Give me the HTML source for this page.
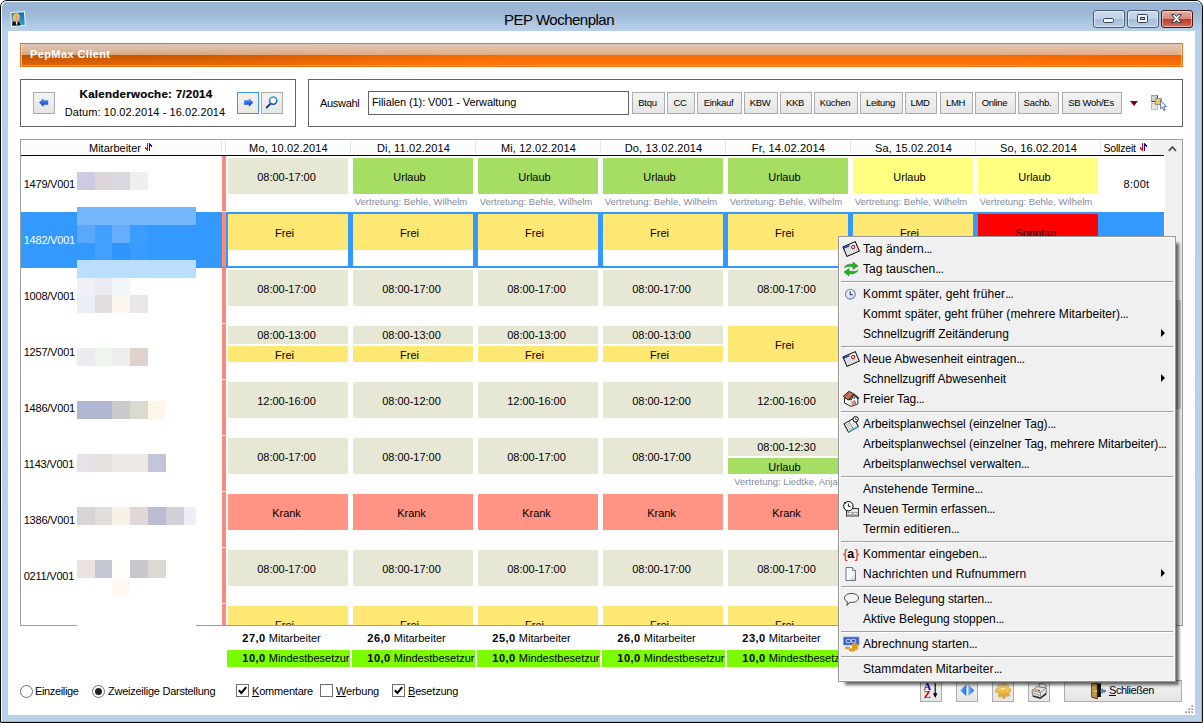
<!DOCTYPE html><html><head><meta charset="utf-8"><title>PEP Wochenplan</title><style>
*{box-sizing:border-box;margin:0;padding:0}
html,body{width:1203px;height:723px;overflow:hidden;background:#fff;font-family:"Liberation Sans",sans-serif;font-size:11px;color:#000}
.a{position:absolute}
svg{position:absolute;overflow:visible}
#frame{left:0;top:0;width:1203px;height:723px;border:1px solid #0c0c0c;border-radius:7px 7px 1px 1px;background:linear-gradient(#98b4d3 0,#9db8d6 12px,#adc6e2 22px,#b9d0ea 30px,#b9d1ea 100%)}
#frame2{left:1px;top:1px;width:1201px;height:721px;border:1px solid #fafcfe;border-right-color:#46d8fa;border-bottom-color:#46d8fa;border-radius:6px 6px 1px 1px}
#client{left:8px;top:31px;width:1187px;height:684px;background:#fff}
#title{left:504px;top:10px;font-size:15px;line-height:20px;letter-spacing:-0.5px;white-space:nowrap}
.cb{top:10px;height:18px;border:1px solid #4b5a70;border-radius:3px;background:linear-gradient(#c9daed 0,#c0d3e9 48%,#a5bedc 52%,#b7cde7 100%);box-shadow:inset 0 0 0 1px rgba(255,255,255,.5)}
#orange{left:20px;top:43px;width:1163px;height:24px;border:1px solid #dc7626;border-bottom-color:#f66e08;color:#fff;font-weight:bold;font-size:11px;line-height:20px;padding-left:9px;letter-spacing:.4px;
 background:linear-gradient(rgba(222,200,186,.97) 0,rgba(222,197,178,.9) 25%,rgba(222,196,175,.71) 50%,rgba(0,0,0,.04) 51%,rgba(255,120,16,.2) 75%,rgba(255,120,16,.5) 100%),linear-gradient(90deg,#c45400 0,#d05a00 14%,#f46a04 32%,#ff7008 45%,#ff7008 80%,#f66600 100%);box-shadow:inset 1px 0 0 rgba(255,255,255,.6),inset -1px 0 0 rgba(255,255,255,.5),inset 0 -1px 0 rgba(255,255,255,.3)}
.box{border:1px solid #646464;background:#fff}
.btn{border:1px solid #acacac;background:linear-gradient(#f3f3f3,#e5e5e5);text-align:center;font-size:9.5px;letter-spacing:-.3px;line-height:19.5px;padding-right:2px;height:22px;top:92px;white-space:nowrap}
.hd{top:141px;height:15px;line-height:15px;text-align:center;font-size:11px;white-space:nowrap}
.c{text-align:center;font-size:11px;white-space:nowrap}
.cm{font-size:9.5px;color:#838a9c;line-height:12px;white-space:nowrap;overflow:hidden;text-align:center;padding-right:4px}
.lbl{left:23.7px;font-size:11px;line-height:12px;letter-spacing:-.22px}
.be{background:#e7e7d6}.ye{background:#ffe773}.gr{background:#a5de63}.ly{background:#ffff80}.rd{background:#ff0000}.kr{background:#ff9484}
#menu{left:838px;top:236px;width:338px;height:446px;background:#f0f0f0;border:1px solid #979797;outline:0;box-shadow:inset 0 0 0 1px rgba(255,255,255,.55),5px 5px 3px -2px rgba(0,0,0,.6)}
.mi{left:24px;font-size:12px;line-height:20px;height:20px;white-space:nowrap;color:#000}
.sep{left:2px;width:332px;height:2px;background:#a0a0a0;border-bottom:1px solid #fff}
.arr{left:322px;width:0;height:0;border-left:4px solid #000;border-top:4px solid transparent;border-bottom:4px solid transparent}
</style></head><body>
<div id="frame" class="a"></div><div id="frame2" class="a"></div>
<div id="title" class="a">PEP Wochenplan</div>
<svg style="left:10px;top:11px" width="16" height="16" viewBox="0 0 16 16"><defs><linearGradient id="ag" x1="0" y1="1" x2="1" y2="0"><stop offset="0" stop-color="#66bcd8"/><stop offset="1" stop-color="#0068bc"/></linearGradient></defs>
<g transform="rotate(-4 8 8)"><rect x="0.6" y="0.6" width="14.8" height="14.8" fill="#f2f7fb"/><rect x="1.6" y="1.6" width="12.8" height="12.8" fill="url(#ag)"/>
<path d="M3.2 9.5 C2.6 5 4 2.4 6.6 2.2 C9.2 2.1 10.2 4.2 9.8 6.4 L9 9.6 L5 10.4 Z" fill="#f6c640"/><path d="M5.6 5.2 C6.2 3.6 8.6 3.8 8.8 5.6 C9 7.6 8.4 9.6 7.2 10.4 L5.4 10.2 C5 8.6 5 6.6 5.6 5.2 Z" fill="#e8a48c"/>
<path d="M1.8 14.4 L2.2 11.4 C2.8 10.4 4.6 10 5.4 10.2 L6.4 14.4 Z M6.6 14.4 L7.2 10.4 C8.6 10.2 9.6 11.6 10 14.4 Z" fill="#0c0c0c"/><path d="M5.2 10 L6.5 14.4 L7.4 10.2 L6.4 11 Z" fill="#fff"/></g></svg>
<div class="a cb" style="left:1093px;width:32px"></div>
<div class="a cb" style="left:1127px;width:32px"></div>
<div class="a cb" style="left:1161px;width:32px;border-color:#4a1418;background:linear-gradient(#e3b0a4 0,#d68874 48%,#bd3a24 52%,#d2705a 100%)"></div>
<svg style="left:1103px;top:18px" width="11" height="5"><rect x=".5" y=".5" width="10" height="4" rx="1" fill="#f4f4f4" stroke="#3a4350"/></svg>
<svg style="left:1137px;top:14px" width="11" height="9"><rect x=".5" y=".5" width="10" height="8" rx="1" fill="#f4f4f4" stroke="#3a4350"/><rect x="3.5" y="3.5" width="4" height="2" fill="#a9c0dc" stroke="#3a4350"/></svg>
<svg style="left:1171px;top:14px" width="11" height="9" viewBox="0 0 11 9"><path d="M.6 .6 L3.8 .6 L5.5 2.5 L7.2 .6 L10.4 .6 L7.2 4.5 L10.4 8.4 L7.2 8.4 L5.5 6.5 L3.8 8.4 L.6 8.4 L3.8 4.5 Z" fill="#f8f8f8" stroke="#2c3850" stroke-width="1" stroke-linejoin="round"/></svg>
<div id="client" class="a"></div>
<div id="orange" class="a">PepMax Client</div>
<div class="a box" style="left:20px;top:79px;width:276px;height:48px"></div>
<div class="a" style="left:46px;top:87px;width:200px;text-align:center;font-weight:bold;font-size:11.5px;letter-spacing:.27px;line-height:14px;white-space:nowrap;-webkit-text-stroke:.2px #000">Kalenderwoche: 7/2014</div>
<div class="a" style="left:45px;top:105px;width:200px;text-align:center;font-size:11px;letter-spacing:.07px;line-height:14px;white-space:nowrap">Datum: 10.02.2014 - 16.02.2014</div>
<div class="a btn" style="left:33px;width:22px"></div>
<div class="a btn" style="left:237px;width:22px;border-color:#3399ff;background:linear-gradient(#f6f1ea,#ebe7e3)"></div>
<div class="a btn" style="left:261px;width:22px"></div>
<svg style="left:39px;top:98px" width="10" height="9" viewBox="0 0 10 9"><defs><linearGradient id="bl" x1="0" y1="0" x2="0" y2="1"><stop offset="0" stop-color="#6aa0f8"/><stop offset=".5" stop-color="#2f6ae0"/><stop offset="1" stop-color="#1038a8"/></linearGradient></defs><path d="M0 4.5 L4.5 0 L4.5 2.2 L9.2 2.2 L9.2 6.8 L4.5 6.8 L4.5 9 Z" fill="url(#bl)"/></svg>
<svg style="left:244px;top:98px" width="10" height="9" viewBox="0 0 10 9"><path d="M9.4 4.5 L4.9 0 L4.9 2.2 L0.2 2.2 L0.2 6.8 L4.9 6.8 L4.9 9 Z" fill="url(#bl)"/></svg>
<svg style="left:264px;top:95px" width="16" height="16" viewBox="0 0 16 16"><defs><linearGradient id="mg" x1="0" y1="0" x2="0" y2="1"><stop offset="0" stop-color="#30a8d0"/><stop offset="1" stop-color="#1848b0"/></linearGradient></defs><path d="M6.8 8.4 L2.2 13" stroke="#12307c" stroke-width="1.8"/><circle cx="9.2" cy="5.6" r="3.6" fill="#fff" stroke="url(#mg)" stroke-width="1.5"/></svg>
<div class="a box" style="left:308px;top:79px;width:875px;height:48px"></div>
<div class="a" style="left:320px;top:96px;font-size:11px;line-height:14px;letter-spacing:-.3px">Auswahl</div>
<div class="a box" style="left:368px;top:91px;width:261px;height:24px;font-size:11px;line-height:20px;padding-left:3px;white-space:nowrap;letter-spacing:-.1px">Filialen (1): V001 - Verwaltung</div>
<div class="a btn" style="left:632px;width:33px">Btqu</div>
<div class="a btn" style="left:667px;width:28px">CC</div>
<div class="a btn" style="left:697px;width:45px">Einkauf</div>
<div class="a btn" style="left:744px;width:34px">KBW</div>
<div class="a btn" style="left:780px;width:32px">KKB</div>
<div class="a btn" style="left:814px;width:44px">Küchen</div>
<div class="a btn" style="left:860px;width:43px">Leitung</div>
<div class="a btn" style="left:905px;width:32px">LMD</div>
<div class="a btn" style="left:940px;width:33px">LMH</div>
<div class="a btn" style="left:975px;width:41px">Online</div>
<div class="a btn" style="left:1018px;width:41px">Sachb.</div>
<div class="a btn" style="left:1062px;width:60px">SB Woh/Es</div>
<div class="a" style="left:1130px;top:101px;width:0;height:0;border-top:5px solid #800000;border-left:4.7px solid transparent;border-right:4.7px solid transparent"></div>
<svg style="left:1151px;top:95px" width="16" height="16" viewBox="0 0 16 16"><rect x=".5" y=".5" width="6" height="6" fill="#cfd2d8" stroke="#98a2b6"/><path d="M.5 6.5 H6.5 V.5" fill="none" stroke="#24387a"/><rect x=".5" y="8.5" width="6" height="6" fill="#e2e4e8" stroke="#b4bccc"/><rect x="4.5" y="3.5" width="6" height="6" fill="#f6cc58" stroke="#a89070"/><path d="M9.4 5.2 L9.4 14 L11.4 12.2 L12.9 15.6 L14.2 15 L12.7 11.7 L15.7 11.5 Z" fill="#e8eef6" stroke="#3c5c94" stroke-width=".8"/></svg>
<div class="a" style="left:20px;top:139px;width:1163px;height:487px;border:1px solid #9a9ea4;background:#fff"></div>
<div class="a" style="left:21px;top:140px;width:1130px;height:14px;background:linear-gradient(#fff,#fafbfc)"></div>
<div class="a" style="left:21px;top:155px;width:1143px;height:1px;background:#000"></div>
<div class="a hd" style="left:89px;text-align:left">Mitarbeiter</div>
<svg style="left:145px;top:143px" width="7" height="8" viewBox="0 0 7 8" shape-rendering="crispEdges"><g fill="#f00"><rect x="2" y="0" width="1" height="8"/><rect x="1" y="5" width="1" height="2"/><rect x="0" y="4" width="1" height="2"/></g><g fill="#00f"><rect x="4" y="0" width="1" height="8"/><rect x="5" y="1" width="1" height="2"/><rect x="6" y="2" width="1" height="2"/></g></svg>
<div class="a hd" style="left:226px;width:125px;letter-spacing:.17px">Mo, 10.02.2014</div>
<div class="a" style="left:225px;top:140px;width:1px;height:13px;background:#dfe8f4"></div>
<div class="a hd" style="left:351px;width:125px;letter-spacing:.17px">Di, 11.02.2014</div>
<div class="a" style="left:350px;top:140px;width:1px;height:13px;background:#dfe8f4"></div>
<div class="a hd" style="left:476px;width:125px;letter-spacing:.17px">Mi, 12.02.2014</div>
<div class="a" style="left:475px;top:140px;width:1px;height:13px;background:#dfe8f4"></div>
<div class="a hd" style="left:601px;width:125px;letter-spacing:.17px">Do, 13.02.2014</div>
<div class="a" style="left:600px;top:140px;width:1px;height:13px;background:#dfe8f4"></div>
<div class="a hd" style="left:726px;width:125px;letter-spacing:.17px">Fr, 14.02.2014</div>
<div class="a" style="left:725px;top:140px;width:1px;height:13px;background:#dfe8f4"></div>
<div class="a hd" style="left:851px;width:125px;letter-spacing:.17px">Sa, 15.02.2014</div>
<div class="a" style="left:850px;top:140px;width:1px;height:13px;background:#dfe8f4"></div>
<div class="a hd" style="left:976px;width:125px;letter-spacing:.17px">So, 16.02.2014</div>
<div class="a" style="left:975px;top:140px;width:1px;height:13px;background:#dfe8f4"></div>
<div class="a" style="left:221px;top:140px;width:1px;height:13px;background:#dfe8f4"></div>
<div class="a" style="left:1100px;top:140px;width:1px;height:13px;background:#dfe8f4"></div>
<div class="a hd" style="left:1103.5px;text-align:left;letter-spacing:-.2px;font-size:10.5px">Sollzeit</div>
<svg style="left:1140px;top:143px" width="7" height="8" viewBox="0 0 7 8" shape-rendering="crispEdges"><g fill="#f00"><rect x="2" y="0" width="1" height="8"/><rect x="1" y="5" width="1" height="2"/><rect x="0" y="4" width="1" height="2"/></g><g fill="#00f"><rect x="4" y="0" width="1" height="8"/><rect x="5" y="1" width="1" height="2"/><rect x="6" y="2" width="1" height="2"/></g></svg>
<div class="a" style="left:1165px;top:140px;width:17px;height:485px;background:#f0f0f0"></div>
<div class="a" style="left:1151px;top:140px;width:14px;height:15px;background:#f0f0f0"></div>
<div class="a" style="left:1166px;top:300px;width:15px;height:109px;background:#c8c8c8"></div>
<svg style="left:1168px;top:145px" width="9" height="7" viewBox="0 0 9 7"><path d="M.8 5.8 L4.4 2 L8 5.8" fill="none" stroke="#505050" stroke-width="1.7"/></svg>
<div class="a" style="left:222px;top:156px;width:4px;height:55px;background:#f98b7e"></div>
<div class="a lbl" style="top:178px;color:#000">1479/V001</div>
<div class="a c be" style="left:228px;top:158px;width:120px;height:36px;line-height:39px;overflow:hidden;padding-right:3px">08:00-17:00</div>
<div class="a c gr" style="left:353px;top:158px;width:120px;height:36px;line-height:39px;overflow:hidden;padding-right:7px">Urlaub</div>
<div class="a cm" style="left:353px;top:196px;width:120px">Vertretung: Behle, Wilhelm</div>
<div class="a c gr" style="left:478px;top:158px;width:120px;height:36px;line-height:39px;overflow:hidden;padding-right:7px">Urlaub</div>
<div class="a cm" style="left:478px;top:196px;width:120px">Vertretung: Behle, Wilhelm</div>
<div class="a c gr" style="left:603px;top:158px;width:120px;height:36px;line-height:39px;overflow:hidden;padding-right:7px">Urlaub</div>
<div class="a cm" style="left:603px;top:196px;width:120px">Vertretung: Behle, Wilhelm</div>
<div class="a c gr" style="left:728px;top:158px;width:120px;height:36px;line-height:39px;overflow:hidden;padding-right:7px">Urlaub</div>
<div class="a cm" style="left:728px;top:196px;width:120px">Vertretung: Behle, Wilhelm</div>
<div class="a c ly" style="left:853px;top:158px;width:120px;height:36px;line-height:39px;overflow:hidden;padding-right:7px">Urlaub</div>
<div class="a cm" style="left:853px;top:196px;width:120px">Vertretung: Behle, Wilhelm</div>
<div class="a c ly" style="left:978px;top:158px;width:120px;height:36px;line-height:39px;overflow:hidden;padding-right:7px">Urlaub</div>
<div class="a cm" style="left:978px;top:196px;width:120px">Vertretung: Behle, Wilhelm</div>
<div class="a" style="left:21px;top:212px;width:1143px;height:56px;background:#3399ff"></div>
<div class="a" style="left:222px;top:212px;width:4px;height:55px;background:#f98b7e"></div>
<div class="a lbl" style="top:234px;color:#fff">1482/V001</div>
<div class="a" style="left:228px;top:250px;width:120px;height:16px;background:#fff"></div>
<div class="a c ye" style="left:228px;top:214px;width:120px;height:36px;line-height:39px;overflow:hidden;padding-right:7px">Frei</div>
<div class="a" style="left:353px;top:250px;width:120px;height:16px;background:#fff"></div>
<div class="a c ye" style="left:353px;top:214px;width:120px;height:36px;line-height:39px;overflow:hidden;padding-right:7px">Frei</div>
<div class="a" style="left:478px;top:250px;width:120px;height:16px;background:#fff"></div>
<div class="a c ye" style="left:478px;top:214px;width:120px;height:36px;line-height:39px;overflow:hidden;padding-right:7px">Frei</div>
<div class="a" style="left:603px;top:250px;width:120px;height:16px;background:#fff"></div>
<div class="a c ye" style="left:603px;top:214px;width:120px;height:36px;line-height:39px;overflow:hidden;padding-right:7px">Frei</div>
<div class="a" style="left:728px;top:250px;width:120px;height:16px;background:#fff"></div>
<div class="a c ye" style="left:728px;top:214px;width:120px;height:36px;line-height:39px;overflow:hidden;padding-right:7px">Frei</div>
<div class="a" style="left:853px;top:250px;width:120px;height:16px;background:#fff"></div>
<div class="a c ye" style="left:853px;top:214px;width:120px;height:36px;line-height:39px;overflow:hidden;padding-right:7px">Frei</div>
<div class="a" style="left:978px;top:250px;width:120px;height:16px;background:#fff"></div>
<div class="a c rd" style="left:978px;top:214px;width:120px;height:36px;line-height:39px;overflow:hidden;padding-right:4px">Sonntag</div>
<div class="a" style="left:222px;top:268px;width:4px;height:55px;background:#f98b7e"></div>
<div class="a lbl" style="top:290px;color:#000">1008/V001</div>
<div class="a c be" style="left:228px;top:270px;width:120px;height:36px;line-height:39px;overflow:hidden;padding-right:3px">08:00-17:00</div>
<div class="a c be" style="left:353px;top:270px;width:120px;height:36px;line-height:39px;overflow:hidden;padding-right:3px">08:00-17:00</div>
<div class="a c be" style="left:478px;top:270px;width:120px;height:36px;line-height:39px;overflow:hidden;padding-right:3px">08:00-17:00</div>
<div class="a c be" style="left:603px;top:270px;width:120px;height:36px;line-height:39px;overflow:hidden;padding-right:3px">08:00-17:00</div>
<div class="a c be" style="left:728px;top:270px;width:120px;height:36px;line-height:39px;overflow:hidden;padding-right:3px">08:00-17:00</div>
<div class="a" style="left:222px;top:324px;width:4px;height:55px;background:#f98b7e"></div>
<div class="a lbl" style="top:346px;color:#000">1257/V001</div>
<div class="a c be" style="left:228px;top:326px;width:120px;height:18px;line-height:19px;padding-right:3px">08:00-13:00</div>
<div class="a c ye" style="left:228px;top:346px;width:120px;height:16px;line-height:18px;padding-right:7px">Frei</div>
<div class="a c be" style="left:353px;top:326px;width:120px;height:18px;line-height:19px;padding-right:3px">08:00-13:00</div>
<div class="a c ye" style="left:353px;top:346px;width:120px;height:16px;line-height:18px;padding-right:7px">Frei</div>
<div class="a c be" style="left:478px;top:326px;width:120px;height:18px;line-height:19px;padding-right:3px">08:00-13:00</div>
<div class="a c ye" style="left:478px;top:346px;width:120px;height:16px;line-height:18px;padding-right:7px">Frei</div>
<div class="a c be" style="left:603px;top:326px;width:120px;height:18px;line-height:19px;padding-right:3px">08:00-13:00</div>
<div class="a c ye" style="left:603px;top:346px;width:120px;height:16px;line-height:18px;padding-right:7px">Frei</div>
<div class="a c ye" style="left:728px;top:326px;width:120px;height:36px;line-height:39px;overflow:hidden;padding-right:7px">Frei</div>
<div class="a" style="left:222px;top:380px;width:4px;height:55px;background:#f98b7e"></div>
<div class="a lbl" style="top:402px;color:#000">1486/V001</div>
<div class="a c be" style="left:228px;top:382px;width:120px;height:36px;line-height:39px;overflow:hidden;padding-right:3px">12:00-16:00</div>
<div class="a c be" style="left:353px;top:382px;width:120px;height:36px;line-height:39px;overflow:hidden;padding-right:3px">08:00-12:00</div>
<div class="a c be" style="left:478px;top:382px;width:120px;height:36px;line-height:39px;overflow:hidden;padding-right:3px">12:00-16:00</div>
<div class="a c be" style="left:603px;top:382px;width:120px;height:36px;line-height:39px;overflow:hidden;padding-right:3px">08:00-12:00</div>
<div class="a c be" style="left:728px;top:382px;width:120px;height:36px;line-height:39px;overflow:hidden;padding-right:3px">12:00-16:00</div>
<div class="a" style="left:222px;top:436px;width:4px;height:55px;background:#f98b7e"></div>
<div class="a lbl" style="top:458px;color:#000">1143/V001</div>
<div class="a c be" style="left:228px;top:438px;width:120px;height:36px;line-height:39px;overflow:hidden;padding-right:3px">08:00-17:00</div>
<div class="a c be" style="left:353px;top:438px;width:120px;height:36px;line-height:39px;overflow:hidden;padding-right:3px">08:00-17:00</div>
<div class="a c be" style="left:478px;top:438px;width:120px;height:36px;line-height:39px;overflow:hidden;padding-right:3px">08:00-17:00</div>
<div class="a c be" style="left:603px;top:438px;width:120px;height:36px;line-height:39px;overflow:hidden;padding-right:3px">08:00-17:00</div>
<div class="a c be" style="left:728px;top:438px;width:120px;height:18px;line-height:19px;padding-right:3px">08:00-12:30</div>
<div class="a c gr" style="left:728px;top:458px;width:120px;height:16px;line-height:18px;padding-right:7px">Urlaub</div>
<div class="a cm" style="left:728px;top:476px;width:120px">Vertretung: Liedtke, Anja</div>
<div class="a" style="left:222px;top:492px;width:4px;height:55px;background:#f98b7e"></div>
<div class="a lbl" style="top:514px;color:#000">1386/V001</div>
<div class="a c kr" style="left:228px;top:494px;width:120px;height:36px;line-height:39px;overflow:hidden;padding-right:3px">Krank</div>
<div class="a c kr" style="left:353px;top:494px;width:120px;height:36px;line-height:39px;overflow:hidden;padding-right:3px">Krank</div>
<div class="a c kr" style="left:478px;top:494px;width:120px;height:36px;line-height:39px;overflow:hidden;padding-right:3px">Krank</div>
<div class="a c kr" style="left:603px;top:494px;width:120px;height:36px;line-height:39px;overflow:hidden;padding-right:3px">Krank</div>
<div class="a c kr" style="left:728px;top:494px;width:120px;height:36px;line-height:39px;overflow:hidden;padding-right:3px">Krank</div>
<div class="a" style="left:222px;top:548px;width:4px;height:55px;background:#f98b7e"></div>
<div class="a lbl" style="top:570px;color:#000">0211/V001</div>
<div class="a c be" style="left:228px;top:550px;width:120px;height:36px;line-height:39px;overflow:hidden;padding-right:3px">08:00-17:00</div>
<div class="a c be" style="left:353px;top:550px;width:120px;height:36px;line-height:39px;overflow:hidden;padding-right:3px">08:00-17:00</div>
<div class="a c be" style="left:478px;top:550px;width:120px;height:36px;line-height:39px;overflow:hidden;padding-right:3px">08:00-17:00</div>
<div class="a c be" style="left:603px;top:550px;width:120px;height:36px;line-height:39px;overflow:hidden;padding-right:3px">08:00-17:00</div>
<div class="a c be" style="left:728px;top:550px;width:120px;height:36px;line-height:39px;overflow:hidden;padding-right:3px">08:00-17:00</div>
<div class="a" style="left:222px;top:604px;width:4px;height:21px;background:#f98b7e"></div>
<div class="a c ye" style="left:228px;top:606px;width:120px;height:19px;line-height:39px;overflow:hidden;padding-right:7px">Frei</div>
<div class="a c ye" style="left:353px;top:606px;width:120px;height:19px;line-height:39px;overflow:hidden;padding-right:7px">Frei</div>
<div class="a c ye" style="left:478px;top:606px;width:120px;height:19px;line-height:39px;overflow:hidden;padding-right:7px">Frei</div>
<div class="a c ye" style="left:603px;top:606px;width:120px;height:19px;line-height:39px;overflow:hidden;padding-right:7px">Frei</div>
<div class="a c ye" style="left:728px;top:606px;width:120px;height:19px;line-height:39px;overflow:hidden;padding-right:7px">Frei</div>
<div class="a" style="left:1123.5px;top:178px;font-size:11px;line-height:12px;letter-spacing:.3px">8:00t</div>
<div class="a" style="left:77px;top:172px;width:18px;height:18px;background:#cbcce2"></div>
<div class="a" style="left:95px;top:172px;width:17px;height:18px;background:#dcd6da"></div>
<div class="a" style="left:112px;top:172px;width:18px;height:18px;background:#d8d8de"></div>
<div class="a" style="left:130px;top:172px;width:18px;height:18px;background:#f1efee"></div>
<div class="a" style="left:77px;top:207px;width:18px;height:18px;background:#74b7fd"></div>
<div class="a" style="left:95px;top:207px;width:17px;height:18px;background:#74b7fd"></div>
<div class="a" style="left:112px;top:207px;width:18px;height:18px;background:#74b7fd"></div>
<div class="a" style="left:130px;top:207px;width:18px;height:18px;background:#74b7fd"></div>
<div class="a" style="left:148px;top:207px;width:18px;height:18px;background:#74b7fd"></div>
<div class="a" style="left:166px;top:207px;width:18px;height:18px;background:#74b7fd"></div>
<div class="a" style="left:184px;top:207px;width:12px;height:18px;background:#74b7fd"></div>
<div class="a" style="left:77px;top:225px;width:18px;height:18px;background:#5aa8fd"></div>
<div class="a" style="left:95px;top:225px;width:17px;height:18px;background:#409fff"></div>
<div class="a" style="left:112px;top:225px;width:18px;height:18px;background:#66adfc"></div>
<div class="a" style="left:130px;top:225px;width:18px;height:18px;background:#3d9cff"></div>
<div class="a" style="left:77px;top:243px;width:18px;height:17px;background:#3399ff"></div>
<div class="a" style="left:95px;top:243px;width:17px;height:17px;background:#43a0ff"></div>
<div class="a" style="left:112px;top:243px;width:18px;height:17px;background:#2f96ff"></div>
<div class="a" style="left:130px;top:243px;width:18px;height:17px;background:#3b9cff"></div>
<div class="a" style="left:77px;top:260px;width:18px;height:18px;background:#bcdefe"></div>
<div class="a" style="left:95px;top:260px;width:17px;height:18px;background:#bcdefe"></div>
<div class="a" style="left:112px;top:260px;width:18px;height:18px;background:#bcdefe"></div>
<div class="a" style="left:130px;top:260px;width:18px;height:18px;background:#bcdefe"></div>
<div class="a" style="left:148px;top:260px;width:18px;height:18px;background:#bcdefe"></div>
<div class="a" style="left:166px;top:260px;width:18px;height:18px;background:#bcdefe"></div>
<div class="a" style="left:184px;top:260px;width:12px;height:18px;background:#bcdefe"></div>
<div class="a" style="left:77px;top:278px;width:18px;height:17px;background:#f0f0f8"></div>
<div class="a" style="left:95px;top:278px;width:17px;height:17px;background:#ebeaf0"></div>
<div class="a" style="left:112px;top:278px;width:18px;height:17px;background:#f2f5f9"></div>
<div class="a" style="left:130px;top:278px;width:18px;height:17px;background:#fcfefe"></div>
<div class="a" style="left:77px;top:295px;width:18px;height:18px;background:#eaf0f8"></div>
<div class="a" style="left:95px;top:295px;width:17px;height:18px;background:#e2dee0"></div>
<div class="a" style="left:112px;top:295px;width:18px;height:18px;background:#fdf6ee"></div>
<div class="a" style="left:130px;top:295px;width:18px;height:18px;background:#e8e6e6"></div>
<div class="a" style="left:77px;top:348px;width:18px;height:18px;background:#eaecef"></div>
<div class="a" style="left:95px;top:348px;width:17px;height:18px;background:#edf5ec"></div>
<div class="a" style="left:112px;top:348px;width:18px;height:18px;background:#eceef0"></div>
<div class="a" style="left:130px;top:348px;width:18px;height:18px;background:#e0d3cb"></div>
<div class="a" style="left:77px;top:401px;width:18px;height:18px;background:#b1b6d2"></div>
<div class="a" style="left:95px;top:401px;width:17px;height:18px;background:#b1b6d2"></div>
<div class="a" style="left:112px;top:401px;width:18px;height:18px;background:#cbcbcd"></div>
<div class="a" style="left:130px;top:401px;width:18px;height:18px;background:#dadace"></div>
<div class="a" style="left:148px;top:401px;width:18px;height:18px;background:#fef6e6"></div>
<div class="a" style="left:77px;top:454px;width:18px;height:18px;background:#e6e2e6"></div>
<div class="a" style="left:95px;top:454px;width:17px;height:18px;background:#e4e2de"></div>
<div class="a" style="left:112px;top:454px;width:18px;height:18px;background:#eceae4"></div>
<div class="a" style="left:130px;top:454px;width:18px;height:18px;background:#eceae2"></div>
<div class="a" style="left:148px;top:454px;width:18px;height:18px;background:#c4c4da"></div>
<div class="a" style="left:77px;top:507px;width:18px;height:18px;background:#d9d5d7"></div>
<div class="a" style="left:95px;top:507px;width:17px;height:18px;background:#e2dfdb"></div>
<div class="a" style="left:112px;top:507px;width:18px;height:18px;background:#f5f1e5"></div>
<div class="a" style="left:130px;top:507px;width:18px;height:18px;background:#e1d7d9"></div>
<div class="a" style="left:148px;top:507px;width:18px;height:18px;background:#babcd2"></div>
<div class="a" style="left:166px;top:507px;width:18px;height:18px;background:#d2d0d6"></div>
<div class="a" style="left:184px;top:507px;width:12px;height:18px;background:#eeeefa"></div>
<div class="a" style="left:77px;top:560px;width:18px;height:18px;background:#ebe3e1"></div>
<div class="a" style="left:95px;top:560px;width:17px;height:18px;background:#c2c8d4"></div>
<div class="a" style="left:112px;top:560px;width:18px;height:18px;background:#fffefa"></div>
<div class="a" style="left:130px;top:560px;width:18px;height:18px;background:#c9c7cd"></div>
<div class="a" style="left:148px;top:560px;width:18px;height:18px;background:#dcd8d4"></div>
<div class="a" style="left:112px;top:578px;width:18px;height:17px;background:#fff8f0"></div>
<div class="a" style="left:77px;top:620px;width:119px;height:8px;background:#fff"></div>
<div class="a c" style="left:227px;top:631px;width:123px;height:14px;line-height:14px;text-align:left;padding-left:15.3px"><b style="letter-spacing:.5px">27,0</b> Mitarbeiter</div>
<div class="a c" style="left:227px;top:650px;width:123px;height:17px;line-height:17px;background:#7cfc00;text-align:left;padding-left:15.3px;overflow:hidden"><b style="letter-spacing:.5px">10,0</b> Mindestbesetzur</div>
<div class="a c" style="left:352px;top:631px;width:123px;height:14px;line-height:14px;text-align:left;padding-left:15.3px"><b style="letter-spacing:.5px">26,0</b> Mitarbeiter</div>
<div class="a c" style="left:352px;top:650px;width:123px;height:17px;line-height:17px;background:#7cfc00;text-align:left;padding-left:15.3px;overflow:hidden"><b style="letter-spacing:.5px">10,0</b> Mindestbesetzur</div>
<div class="a c" style="left:477px;top:631px;width:123px;height:14px;line-height:14px;text-align:left;padding-left:15.3px"><b style="letter-spacing:.5px">25,0</b> Mitarbeiter</div>
<div class="a c" style="left:477px;top:650px;width:123px;height:17px;line-height:17px;background:#7cfc00;text-align:left;padding-left:15.3px;overflow:hidden"><b style="letter-spacing:.5px">10,0</b> Mindestbesetzur</div>
<div class="a c" style="left:602px;top:631px;width:123px;height:14px;line-height:14px;text-align:left;padding-left:15.3px"><b style="letter-spacing:.5px">26,0</b> Mitarbeiter</div>
<div class="a c" style="left:602px;top:650px;width:123px;height:17px;line-height:17px;background:#7cfc00;text-align:left;padding-left:15.3px;overflow:hidden"><b style="letter-spacing:.5px">10,0</b> Mindestbesetzur</div>
<div class="a c" style="left:727px;top:631px;width:123px;height:14px;line-height:14px;text-align:left;padding-left:15.3px"><b style="letter-spacing:.5px">23,0</b> Mitarbeiter</div>
<div class="a c" style="left:727px;top:650px;width:123px;height:17px;line-height:17px;background:#7cfc00;text-align:left;padding-left:15.3px;overflow:hidden"><b style="letter-spacing:.5px">10,0</b> Mindestbesetzur</div>
<div class="a" style="left:20px;top:685px;width:13px;height:13px;border:1px solid #707070;border-radius:50%;background:#fff"></div>
<div class="a" style="left:35px;top:684px;line-height:14px;letter-spacing:-.35px">Einzeilige</div>
<div class="a" style="left:92px;top:685px;width:13px;height:13px;border:1px solid #707070;border-radius:50%;background:#fff"></div>
<div class="a" style="left:95px;top:688px;width:7px;height:7px;border-radius:50%;background:#222"></div>
<div class="a" style="left:108px;top:684px;line-height:14px;letter-spacing:-.25px">Zweizeilige Darstellung</div>
<div class="a" style="left:236px;top:684px;width:13px;height:13px;border:1px solid #707070;background:#fff"></div>
<svg style="left:238px;top:686px" width="9" height="9" viewBox="0 0 9 9"><path d="M.8 4.2 L3.4 7 L8.2 1.2" fill="none" stroke="#000" stroke-width="2"/></svg>
<div class="a" style="left:252px;top:684px;line-height:14px;letter-spacing:-.2px"><u>K</u>ommentare</div>
<div class="a" style="left:320px;top:684px;width:13px;height:13px;border:1px solid #707070;background:#fff"></div>
<div class="a" style="left:336px;top:684px;line-height:14px;letter-spacing:-.2px"><u>W</u>erbung</div>
<div class="a" style="left:392px;top:684px;width:13px;height:13px;border:1px solid #707070;background:#fff"></div>
<svg style="left:394px;top:686px" width="9" height="9" viewBox="0 0 9 9"><path d="M.8 4.2 L3.4 7 L8.2 1.2" fill="none" stroke="#000" stroke-width="2"/></svg>
<div class="a" style="left:408px;top:684px;line-height:14px;letter-spacing:-.2px"><u>B</u>esetzung</div>
<div class="a btn" style="left:920px;top:680px;width:22px"></div>
<div class="a btn" style="left:956px;top:680px;width:22px"></div>
<div class="a btn" style="left:992px;top:680px;width:22px"></div>
<div class="a btn" style="left:1028px;top:680px;width:22px"></div>
<div class="a btn" style="left:1064px;top:680px;width:118px;font-size:11px;text-align:left;padding-left:44px;letter-spacing:-.45px"><u>S</u>chließen</div>
<svg style="left:923px;top:683px" width="16" height="16" viewBox="0 0 16 16"><text x="0.6" y="7" font-family="Liberation Serif,serif" font-size="10.5" font-weight="bold" fill="#0000c0">A</text><text x="0.8" y="14.8" font-family="Liberation Serif,serif" font-size="10.5" font-weight="bold" fill="#c00000">Z</text><path d="M12.2 0 V13" stroke="#000" stroke-width="1.1"/><path d="M10 10.2 L12.2 15 L14.5 10.2 Z" fill="#000"/></svg>
<svg style="left:959px;top:683px" width="16" height="16" viewBox="0 0 16 16"><defs><linearGradient id="lr" x1="0" y1="0" x2="1" y2="0"><stop offset="0" stop-color="#7ab4f8"/><stop offset="1" stop-color="#1c66e6"/></linearGradient></defs><path d="M7.3 1.8 V13 L1 7.4 Z" fill="url(#lr)"/><path d="M9.3 1.8 V13 L15.4 7.4 Z" fill="url(#lr)"/></svg>
<svg style="left:995px;top:683px" width="17" height="16" viewBox="0 0 17 16"><defs><linearGradient id="gg" x1="0" y1="0" x2="0" y2="1"><stop offset="0" stop-color="#f8dc88"/><stop offset=".5" stop-color="#f0c048"/><stop offset="1" stop-color="#d89820"/></linearGradient></defs><g fill="url(#gg)" stroke="#c8962c" stroke-width=".5"><path d="M7 .5 H9.6 L10 2.6 L12.2 1.6 L14 3.2 L12.8 5 L15.8 5.6 L16 8.6 L13.6 9 L14.6 12.6 L12.6 13.8 L11 11.4 L10.4 15 L7.8 15.4 L7.2 11.8 L5.4 14.4 L3.2 13.2 L4 9.8 L.6 9.2 L.6 6 L3.6 5.2 L2.4 3 L4.4 1.6 L6.4 2.8 Z"/></g><ellipse cx="8.2" cy="5.6" rx="2.8" ry="1.5" fill="#fdf0c0" stroke="#d8a030" stroke-width=".6"/></svg>
<svg style="left:1031px;top:683px" width="16" height="16" viewBox="0 0 16 16"><path d="M7.5 1 L13.5 .6 L15.5 3.4 L10 5.4 Z" fill="#fff" stroke="#555" stroke-width=".7"/><path d="M1 7.4 L6.4 3.6 L15.2 5 L15.4 9.6 L9.6 14.6 L1.6 12.4 Z" fill="#e4e4e4" stroke="#555" stroke-width=".7"/><path d="M1.6 12.4 L9.6 14.6 L15.4 9.6 L15.4 11.4 L9.6 16 L1.8 13.8 Z" fill="#222"/><path d="M1 7.4 L9.4 9.6 L15.2 5 M9.4 9.6 L9.6 14.6" fill="none" stroke="#666" stroke-width=".7"/><path d="M2 9.6 L9 11.6 L9 13 L2 11 Z" fill="#b0b0b0"/><rect x="4.4" y="6.2" width="1.8" height="1.3" fill="#0c0"/><rect x="6.8" y="6.8" width="2" height="1.3" fill="#e00"/></svg>
<svg style="left:1090px;top:682px" width="18" height="18" viewBox="0 0 18 18"><path d="M2 1.5 H11 V15 H7.5 V17 L2 15.5 Z" fill="#111"/><path d="M1.6 1.8 L7.2 1.2 L7.2 16.8 L1.6 15.2 Z" fill="#c8a458" stroke="#3c2c10" stroke-width=".8"/><path d="M3 3.6 L5.8 3.4 V8 L3 8 Z M3 10 L5.8 10.2 V14.6 L3 13.8 Z" fill="none" stroke="#a07c38" stroke-width=".6"/><circle cx="6" cy="9.4" r=".8" fill="#ff0"/><path d="M10 9 L12.4 6.6 L12.4 8 L15.4 8 L15.4 10 L12.4 10 L12.4 11.4 Z" fill="#6c8cac" stroke="#2c405c" stroke-width=".5"/></svg>
<div id="menu" class="a">
<div class="a mi" style="top:2px;letter-spacing:0.08px">Tag ändern<span style="letter-spacing:-.72px">...</span></div>
<div class="a mi" style="top:22px;letter-spacing:0.07px">Tag tauschen<span style="letter-spacing:-.72px">...</span></div>
<div class="a sep" style="top:44px"></div>
<div class="a mi" style="top:47px;letter-spacing:0.14px">Kommt später, geht früher<span style="letter-spacing:-.72px">...</span></div>
<div class="a mi" style="top:67px;letter-spacing:0.05px">Kommt später, geht früher (mehrere Mitarbeiter)<span style="letter-spacing:-.72px">...</span></div>
<div class="a mi" style="top:87px">Schnellzugriff Zeitänderung</div>
<div class="a arr" style="top:92px"></div>
<div class="a sep" style="top:109px"></div>
<div class="a mi" style="top:112px">Neue Abwesenheit eintragen<span style="letter-spacing:-.72px">...</span></div>
<div class="a mi" style="top:132px">Schnellzugriff Abwesenheit</div>
<div class="a arr" style="top:137px"></div>
<div class="a mi" style="top:152px;letter-spacing:-0.07px">Freier Tag<span style="letter-spacing:-.72px">...</span></div>
<div class="a sep" style="top:174px"></div>
<div class="a mi" style="top:177px;letter-spacing:-0.04px">Arbeitsplanwechsel (einzelner Tag)<span style="letter-spacing:-.72px">...</span></div>
<div class="a mi" style="top:197px;letter-spacing:-0.035px">Arbeitsplanwechsel (einzelner Tag, mehrere Mitarbeiter)<span style="letter-spacing:-.72px">...</span></div>
<div class="a mi" style="top:217px">Arbeitsplanwechsel verwalten<span style="letter-spacing:-.72px">...</span></div>
<div class="a sep" style="top:239px"></div>
<div class="a mi" style="top:242px;letter-spacing:0.09px">Anstehende Termine<span style="letter-spacing:-.72px">...</span></div>
<div class="a mi" style="top:262px">Neuen Termin erfassen<span style="letter-spacing:-.72px">...</span></div>
<div class="a mi" style="top:282px;letter-spacing:0.17px">Termin editieren<span style="letter-spacing:-.72px">...</span></div>
<div class="a sep" style="top:304px"></div>
<div class="a mi" style="top:307px;letter-spacing:0.06px">Kommentar eingeben<span style="letter-spacing:-.72px">...</span></div>
<div class="a mi" style="top:327px;letter-spacing:0.12px">Nachrichten und Rufnummern</div>
<div class="a arr" style="top:332px"></div>
<div class="a sep" style="top:349px"></div>
<div class="a mi" style="top:352px;letter-spacing:-0.08px">Neue Belegung starten<span style="letter-spacing:-.72px">...</span></div>
<div class="a mi" style="top:372px">Aktive Belegung stoppen<span style="letter-spacing:-.72px">...</span></div>
<div class="a sep" style="top:394px"></div>
<div class="a mi" style="top:397px;letter-spacing:0.07px">Abrechnung starten<span style="letter-spacing:-.72px">...</span></div>
<div class="a sep" style="top:419px"></div>
<div class="a mi" style="top:422px;letter-spacing:0.12px">Stammdaten Mitarbeiter<span style="letter-spacing:-.72px">...</span></div>
<svg style="left:4px;top:4px" width="16" height="16" viewBox="0 0 16 16"><g transform="rotate(-23.5 8 8)"><rect x="1.4" y="3" width="13.4" height="10.2" fill="#fff" stroke="#000" stroke-width="1"/><rect x="1.9" y="3.5" width="6" height="1.7" fill="#2040d0"/><path d="M3.6 5.6 V12.6 M5.4 5.6 V12.6 M7.2 5.6 V12.6 M9 5.6 V12.6 M10.8 9.6 V12.6 M12.6 9.6 V12.6" stroke="#b8b8cc" stroke-width=".8"/><circle cx="10.8" cy="7" r="1.6" fill="#fff" stroke="#c01010" stroke-width="1.1"/></g></svg><svg style="left:4px;top:24px" width="16" height="16" viewBox="0 0 16 16"><path d="M1 6.5 C3 3.5 7 2.5 10 3.5 L10 1 L15 5 L10 8.5 L10 6 C7 5.2 4 5.5 1 6.5 Z" fill="#22b022" stroke="#108010" stroke-width=".5"/><path d="M15 9.5 C13 12.5 9 13.5 6 12.5 L6 15 L1 11 L6 7.5 L6 10 C9 10.8 12 10.5 15 9.5 Z" fill="#22b022" stroke="#108010" stroke-width=".5"/></svg><svg style="left:5px;top:51px" width="13" height="13" viewBox="0 0 13 13"><defs><radialGradient id="ck" cx=".4" cy=".35" r=".7"><stop offset="0" stop-color="#fff"/><stop offset="1" stop-color="#c8d4ec"/></radialGradient></defs><circle cx="6.4" cy="6.2" r="4.9" fill="url(#ck)" stroke="#7088c0" stroke-width="1.1"/><path d="M6.2 3.2 V6.8 H8.8" fill="none" stroke="#203070" stroke-width="1.1"/></svg><svg style="left:4px;top:114px" width="16" height="16" viewBox="0 0 16 16"><g transform="rotate(-23.5 8 8)"><rect x="1.4" y="3" width="13.4" height="10.2" fill="#fff" stroke="#000" stroke-width="1"/><rect x="1.9" y="3.5" width="6" height="1.7" fill="#2040d0"/><path d="M3.6 5.6 V12.6 M5.4 5.6 V12.6 M7.2 5.6 V12.6 M9 5.6 V12.6 M10.8 9.6 V12.6 M12.6 9.6 V12.6" stroke="#b8b8cc" stroke-width=".8"/><circle cx="10.8" cy="7" r="1.6" fill="#fff" stroke="#c01010" stroke-width="1.1"/></g></svg><svg style="left:4px;top:154px" width="16" height="16" viewBox="0 0 16 16"><defs><linearGradient id="rf" x1="0" y1="0" x2="1" y2="1"><stop offset="0" stop-color="#8c3018"/><stop offset=".5" stop-color="#d07858"/><stop offset="1" stop-color="#a84428"/></linearGradient></defs><path d="M1.5 7 V12 L8.2 15.5 L14.8 12.9 V7 L10.7 3.6 L8.2 9 Z" fill="#fff" stroke="#111" stroke-width=".9" stroke-linejoin="round"/><path d="M8.2 9.4 V15.3" stroke="#999" stroke-width=".6"/><path d="M9.7 14.8 V11.4 C9.7 9.4 12.6 9.2 12.6 11.2 V13.7 Z" fill="#e89880" stroke="#803020" stroke-width=".6"/><circle cx="11.1" cy="6.9" r="1" fill="#2070e0"/><path d="M.3 5.3 L5.9 .3 L10.7 2.7 L5.4 9.2 Z" fill="url(#rf)" stroke="#111" stroke-width=".8" stroke-linejoin="round"/><path d="M10.7 2.7 L15.8 6.8 L15 7.8 L10.4 4.2 L5.4 9.2" fill="#a84428" stroke="#111" stroke-width=".8" stroke-linejoin="round"/></svg><svg style="left:4px;top:179px" width="16" height="16" viewBox="0 0 16 16"><g transform="rotate(-29 8 9)"><path d="M2.4 4.6 H13.6 V14 H2.4 Z" fill="#fff" stroke="#000" stroke-width=".9"/><path d="M8 4.6 V14" stroke="#555" stroke-width=".7"/><path d="M3.6 6.6 H7 M3.6 8.4 H7 M3.6 10.2 H7 M3.6 12 H7" stroke="#aaa" stroke-width=".9"/><path d="M9 9 H12.6 M9 10.8 H12.6 M9 12.4 H12.6" stroke="#ccc" stroke-width=".8"/><path d="M2.4 14 H13.6" stroke="#28a8a8" stroke-width="1.3"/></g><circle cx="12.6" cy="3.3" r="2.7" fill="#fff" stroke="#000" stroke-width="1"/><path d="M12.6 1.8 V3.5 H13.9" stroke="#000" stroke-width=".7" fill="none"/></svg><svg style="left:4px;top:264px" width="16" height="16" viewBox="0 0 16 16"><rect x="3.5" y="7.5" width="12" height="7.5" fill="#e8e8e8" stroke="#222" stroke-width=".9"/><rect x="5" y="11.5" width="9" height="2" fill="#fff" stroke="#666" stroke-width=".5"/><rect x="9" y="12" width="1.4" height="1" fill="#0b0"/><circle cx="5.4" cy="5.2" r="4.7" fill="#fff" stroke="#000" stroke-width="1"/><path d="M5.4 2.6 V5.4 H7.6" stroke="#000" stroke-width=".9" fill="none"/><path d="M1.5 1.2 L3 2.4" stroke="#000" stroke-width="1.2"/></svg><svg style="left:4px;top:309px" width="18" height="16" viewBox="0 0 18 16"><text x="0.2" y="12" font-family="Liberation Sans,sans-serif" font-size="13" fill="#d02020">{</text><text x="4.2" y="12.4" font-family="Liberation Sans,sans-serif" font-size="12.5" font-weight="bold" fill="#000">a</text><text x="11.8" y="12" font-family="Liberation Sans,sans-serif" font-size="13" fill="#d02020">}</text></svg><svg style="left:4px;top:329px" width="16" height="16" viewBox="0 0 16 16"><defs><linearGradient id="pg" x1="0" y1="0" x2="1" y2="1"><stop offset=".5" stop-color="#fff"/><stop offset="1" stop-color="#b8c8e0"/></linearGradient></defs><path d="M3 1.5 H9.5 L12.5 4.5 V14.5 H3 Z" fill="url(#pg)" stroke="#606878" stroke-width=".9"/><path d="M9.5 1.5 V4.5 H12.5" fill="#e8eef8" stroke="#606878" stroke-width=".8"/></svg><svg style="left:4px;top:355px" width="18" height="16" viewBox="0 0 18 16"><path d="M8.5 1.5 C13 1.5 15.5 3.6 15.5 6 C15.5 8.6 12.5 10.4 8.5 10.4 C7.8 10.4 7.2 10.35 6.6 10.25 L4 13.5 L4.4 9.7 C2.6 8.9 1.5 7.6 1.5 6 C1.5 3.6 4 1.5 8.5 1.5 Z" fill="#f4f4f4" stroke="#333" stroke-width=".9"/></svg><svg style="left:4px;top:399px" width="17" height="16" viewBox="0 0 17 16"><rect x=".5" y="1" width="15.5" height="8" fill="#3860c8" stroke="#8098d8" stroke-width=".6"/><ellipse cx="5.5" cy="5" rx="2.5" ry="1.8" fill="none" stroke="#dfe8ff" stroke-width=".9"/><ellipse cx="10.5" cy="5" rx="2.5" ry="1.8" fill="none" stroke="#dfe8ff" stroke-width=".9"/><g fill="#f0b020" stroke="#a87010" stroke-width=".5"><ellipse cx="12" cy="8.5" rx="3" ry="1.2"/><ellipse cx="12" cy="10.5" rx="3" ry="1.2"/><ellipse cx="12" cy="12.5" rx="3" ry="1.2"/><ellipse cx="9" cy="14" rx="3" ry="1.2"/><ellipse cx="4.5" cy="12" rx="2.4" ry="1"/></g></svg>
</div>
<svg style="left:1185px;top:705px" width="8" height="8" viewBox="0 0 8 8" shape-rendering="crispEdges"><rect x="6" y="0" width="2" height="2" fill="#c4c4c4"/><rect x="7" y="1" width="1" height="1" fill="#8c8c8c"/><rect x="3" y="3" width="2" height="2" fill="#c4c4c4"/><rect x="4" y="4" width="1" height="1" fill="#8c8c8c"/><rect x="6" y="3" width="2" height="2" fill="#c4c4c4"/><rect x="7" y="4" width="1" height="1" fill="#8c8c8c"/><rect x="0" y="6" width="2" height="2" fill="#c4c4c4"/><rect x="1" y="7" width="1" height="1" fill="#8c8c8c"/><rect x="3" y="6" width="2" height="2" fill="#c4c4c4"/><rect x="4" y="7" width="1" height="1" fill="#8c8c8c"/><rect x="6" y="6" width="2" height="2" fill="#c4c4c4"/><rect x="7" y="7" width="1" height="1" fill="#8c8c8c"/></svg>
</body></html>
